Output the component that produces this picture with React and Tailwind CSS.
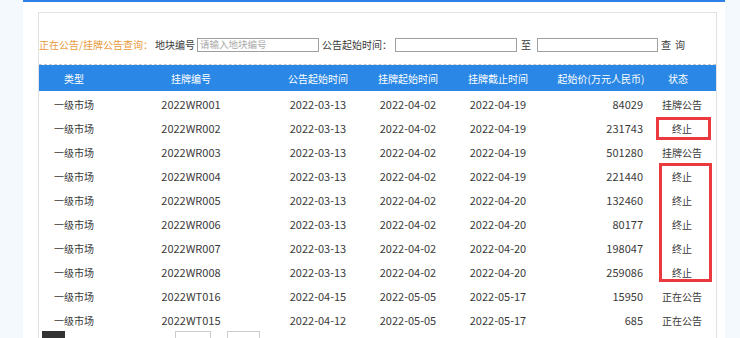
import React from "react";

const rows = [
  ["一级市场", "2022WR001", "2022-03-13", "2022-04-02", "2022-04-19", "84029", "挂牌公告"],
  ["一级市场", "2022WR002", "2022-03-13", "2022-04-02", "2022-04-19", "231743", "终止"],
  ["一级市场", "2022WR003", "2022-03-13", "2022-04-02", "2022-04-19", "501280", "挂牌公告"],
  ["一级市场", "2022WR004", "2022-03-13", "2022-04-02", "2022-04-19", "221440", "终止"],
  ["一级市场", "2022WR005", "2022-03-13", "2022-04-02", "2022-04-20", "132460", "终止"],
  ["一级市场", "2022WR006", "2022-03-13", "2022-04-02", "2022-04-20", "80177", "终止"],
  ["一级市场", "2022WR007", "2022-03-13", "2022-04-02", "2022-04-20", "198047", "终止"],
  ["一级市场", "2022WR008", "2022-03-13", "2022-04-02", "2022-04-20", "259086", "终止"],
  ["一级市场", "2022WT016", "2022-04-15", "2022-05-05", "2022-05-17", "15950", "正在公告"],
  ["一级市场", "2022WT015", "2022-04-12", "2022-05-05", "2022-05-17", "685", "正在公告"],
];

const cols = "grid grid-cols-[70px_164px_90px_90px_90px_116px_58px]";

export default function App() {
  return (
    <div
      className="relative w-[740px] h-[338px] overflow-hidden bg-[#f3f9fd] flex text-[#3a3a3a]"
      style={{ fontFamily: '"Noto Sans CJK SC", "Noto Sans", sans-serif' }}
    >
      <div className="w-[23px] shrink-0" />
      <div className="w-[702px] shrink-0 bg-white border-t-2 border-[#2f80e6] pl-[15px] pr-[8px] pt-[10px]">
        <div className="border border-[#e2e2e2] h-[400px]">
          <div className="flex items-center h-[52px] pt-[12px] border-b border-dashed border-[#c8c8c8] leading-none whitespace-nowrap text-[10px]">
            <span className="w-[116px] shrink-0 text-[#e89a3c]">正在公告/挂牌公告查询：</span>
            <span className="w-[42px] shrink-0">地块编号</span>
            <div className="w-[122px] shrink-0 h-[14px] border border-[#a0a0a0] text-[9.5px] text-[#aaa] pl-[2px] flex items-center">请输入地块编号</div>
            <span className="ml-[3px] w-[73px] shrink-0">公告起始时间：</span>
            <div className="w-[122px] shrink-0 h-[14px] border border-[#a0a0a0]" />
            <span className="ml-[4px] w-[16px] shrink-0">至</span>
            <div className="w-[121px] shrink-0 h-[14px] border border-[#a0a0a0]" />
            <span className="ml-[3px] shrink-0 tracking-[4px]">查询</span>
          </div>
          <div className={`${cols} h-[26px] bg-[#2a87e5] text-white items-center text-[10px] pt-[1px]`}>
            <div className="text-center">类型</div>
            <div className="text-center">挂牌编号</div>
            <div className="text-center">公告起始时间</div>
            <div className="text-center">挂牌起始时间</div>
            <div className="text-center">挂牌截止时间</div>
            <div className="text-center">起始价(万元人民币)</div>
            <div className="text-center pr-[20px]">状态</div>
          </div>
          {rows.map((r, i) => (
            <div key={i} className={`${cols} h-[24px] items-center pt-[2px]`}>
              <div className="text-center text-[10px]">{r[0]}</div>
              <div className="text-center text-[11px]">{r[1]}</div>
              <div className="text-center text-[11px]">{r[2]}</div>
              <div className="text-center text-[11px]">{r[3]}</div>
              <div className="text-center text-[11px]">{r[4]}</div>
              <div className="text-right pr-[16px] text-[11px]">{r[5]}</div>
              <div className="text-center pr-[12px] text-[10px]">{r[6]}</div>
            </div>
          ))}
          <div className="flex h-[20px] relative">
            <div className="ml-[3px] w-[23px] h-[20px] bg-[#333]" />
            <div className="ml-[110px] w-[36px] h-[20px] border border-[#ccc] bg-white" />
            <div className="ml-[16px] w-[33px] h-[20px] border border-[#ccc] bg-white" />
          </div>
        </div>
      </div>
      <div className="flex-1" />
      <div className="absolute left-[656px] top-[117px] w-[55px] h-[23px] border-[3px] border-[#ea3a3f]" />
      <div className="absolute left-[659px] top-[163px] w-[53px] h-[119px] border-[3px] border-[#ea3a3f]" />
    </div>
  );
}
